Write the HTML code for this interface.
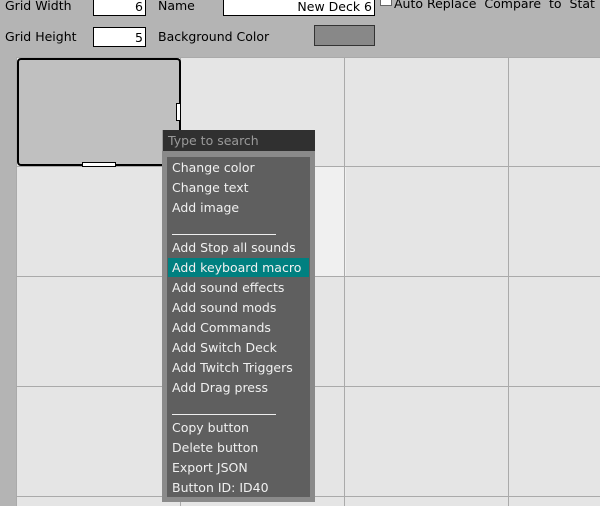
<!DOCTYPE html>
<html style="overflow:hidden;width:600px;height:506px"><head><style>
body{margin:0;width:600px;height:506px;overflow:hidden;background:#b4b4b4;position:relative;font-family:"DejaVu Sans","Liberation Sans",sans-serif;font-size:12.5px;color:#000}
.a{position:absolute}
.inp{position:absolute;background:#fff;border:1px solid #000;box-sizing:border-box;text-align:right;padding-right:2px;font-size:12.5px;line-height:17px}
.grid{position:absolute;left:16px;top:57px;width:584px;height:449px;background:#e5e5e5;border-left:1px solid #aaa;border-top:1px solid #aaa;overflow:hidden;box-sizing:border-box}
.vl{position:absolute;top:0;width:1px;height:460px;background:#aaa}
.hl{position:absolute;left:0;height:1px;width:600px;background:#aaa}
.menu{position:absolute;left:162px;top:151px;width:153px;height:351px;background:#8a8a8a}
.inner{position:absolute;left:5px;top:6px;width:143px;height:340px;background:#5f5f5f}
.it{position:absolute;left:5px;color:#f0f0f0;white-space:nowrap;line-height:20px;height:20px;top:1px}
</style></head><body>
<div class="a" style="left:5px;top:-2px">Grid Width</div>
<div class="inp" style="left:93px;top:-3px;width:53px;height:19px">6</div>
<div class="a" style="left:158px;top:-2px">Name</div>
<div class="inp" style="left:223px;top:-3px;width:152px;height:19px">New Deck 6</div>
<div class="a" style="left:380px;top:-6px;width:10px;height:10px;background:#fff;border:1px solid #666"></div>
<div class="a" style="left:394px;top:-4px;white-space:nowrap">Auto Replace &nbsp;Compare &nbsp;to &nbsp;Stat</div>
<div class="a" style="left:5px;top:29px">Grid Height</div>
<div class="inp" style="left:93px;top:27px;width:53px;height:20px;line-height:19px">5</div>
<div class="a" style="left:158px;top:29px">Background Color</div>
<div class="a" style="left:314px;top:25px;width:61px;height:21px;background:#888;border:1px solid #333;box-sizing:border-box"></div>
<div class="grid">
<div class="a" style="left:164px;top:109px;width:165px;height:110px;background:#f0f0f0"></div>
<div class="vl" style="left:163px"></div><div class="vl" style="left:327px"></div><div class="vl" style="left:491px"></div>
<div class="hl" style="top:108px"></div><div class="hl" style="top:218px"></div><div class="hl" style="top:328px"></div><div class="hl" style="top:438px"></div>
</div>
<div class="a" style="left:17px;top:58px;width:164px;height:108px;background:#c0c0c0;border:2px solid #000;border-radius:4px;box-sizing:border-box"></div>
<div class="a" style="left:176px;top:103px;width:5px;height:18px;background:#fff;border:1px solid #000;box-sizing:border-box"></div>
<div class="a" style="left:82px;top:162px;width:34px;height:5px;background:#fff;border:1px solid #000;box-sizing:border-box"></div>
<div class="a" style="left:162px;top:130px;width:153px;height:21px;background:#303030;color:#999;line-height:22px;padding-left:5px;box-sizing:border-box;border-left:1px solid #999">Type to search</div>
<div class="menu"><div class="inner">
<div class="it" style="top:1px">Change color</div>
<div class="it" style="top:21px">Change text</div>
<div class="it" style="top:41px">Add image</div>
<div class="a" style="left:5px;top:77px;width:104px;height:1px;background:#eee"></div>
<div class="it" style="top:81px">Add Stop all sounds</div>
<div class="a" style="left:1px;top:101px;width:141px;height:19px;background:#008080"></div>
<div class="it" style="top:101px">Add keyboard macro</div>
<div class="it" style="top:121px">Add sound effects</div>
<div class="it" style="top:141px">Add sound mods</div>
<div class="it" style="top:161px">Add Commands</div>
<div class="it" style="top:181px">Add Switch Deck</div>
<div class="it" style="top:201px">Add Twitch Triggers</div>
<div class="it" style="top:221px">Add Drag press</div>
<div class="a" style="left:5px;top:257px;width:104px;height:1px;background:#eee"></div>
<div class="it" style="top:261px">Copy button</div>
<div class="it" style="top:281px">Delete button</div>
<div class="it" style="top:301px">Export JSON</div>
<div class="it" style="top:321px">Button ID: ID40</div>
</div></div>
</body></html>
